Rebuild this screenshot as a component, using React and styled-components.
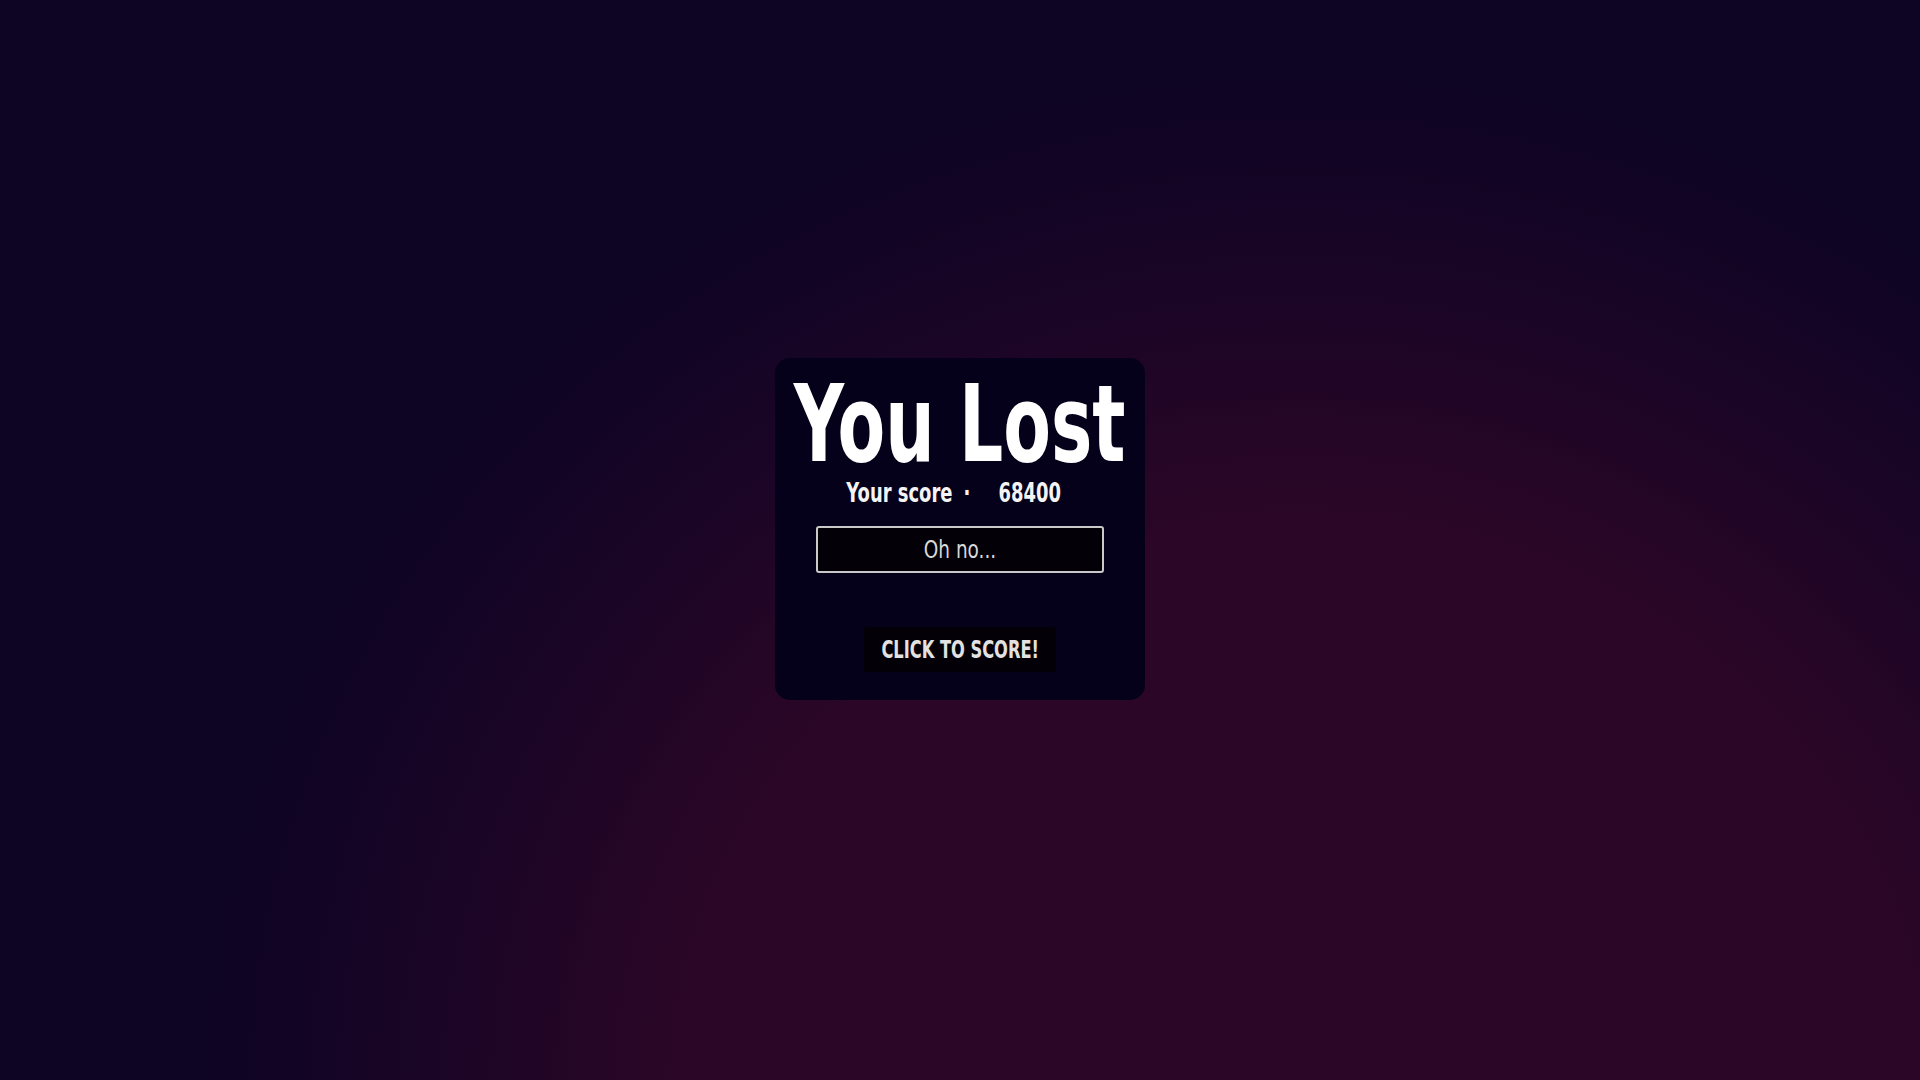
import * as React from 'react';
import styled, {createGlobalStyle} from 'styled-components';

const GlobalStyle = createGlobalStyle`
  html, body {
    margin: 0;
    padding: 0;
    height: 100%;
  }
  body {
    font-family: 'DejaVu Sans', 'Liberation Sans', sans-serif;
    background: #0e0424;
  }
  #root {
    height: 100%;
  }
`;

const Page = styled.div`
  box-sizing: border-box;
  width: 100%;
  height: 100vh;
  display: flex;
  align-items: center;
  justify-content: center;
  padding-bottom: 23px;
  background: radial-gradient(
    ellipse 730px 683px at 1300px 1100px,
    #2c0626 0%,
    #2b0626 85%,
    #1a0526 120%,
    #0e0424 150%
  );
`;

const Card = styled.div`
  box-sizing: border-box;
  width: 370px;
  padding: 13px 0 28px;
  display: flex;
  flex-direction: column;
  align-items: center;
  background-color: #06011a;
  border-radius: 15px;
`;

// the condensed display face isn't installed, so squeeze the text horizontally
const Squeeze = styled.span`
  display: inline-block;
  white-space: nowrap;
  transform: scaleX(${(p) => p.$x});
  transform-origin: center;
`;

const Title = styled.h1`
  margin: 0;
  font-size: 107px;
  line-height: 1;
  font-weight: 700;
  color: #ffffff;
  white-space: nowrap;
`;

const ScoreLine = styled.div`
  margin: 2px 12px 0 0;
  font-size: 26px;
  line-height: 1;
  font-weight: 700;
  color: #f4f4f4;
  white-space: nowrap;
`;

const Separator = styled.span`
  margin: 0 41px 0 16px;
`;

const Message = styled.div`
  box-sizing: border-box;
  margin-top: 20px;
  width: 288px;
  height: 47px;
  display: flex;
  align-items: center;
  justify-content: center;
  background-color: #030008;
  border: 2px solid #c9c9c9;
  border-radius: 3px;
  font-size: 25px;
  line-height: 1;
  color: #d9d9d9;
`;

const ScoreButton = styled.button`
  margin-top: 54px;
  width: 192px;
  height: 45px;
  padding: 0;
  display: flex;
  align-items: center;
  justify-content: center;
  border: none;
  border-radius: 3px;
  background-color: #040007;
  font-family: inherit;
  font-size: 25px;
  line-height: 1;
  font-weight: 700;
  color: #e2e2e2;
  cursor: pointer;
`;

export default function App() {
  return (
    <React.Fragment>
      <GlobalStyle />
      <Page>
        <Card>
          <Title>
            <Squeeze $x={0.649}>You Lost</Squeeze>
          </Title>
          <ScoreLine>
            <Squeeze $x={0.69}>
              Your score<Separator>·</Separator>68400
            </Squeeze>
          </ScoreLine>
          <Message>
            <Squeeze $x={0.738}>Oh no...</Squeeze>
          </Message>
          <ScoreButton>
            <Squeeze $x={0.65}>CLICK TO SCORE!</Squeeze>
          </ScoreButton>
        </Card>
      </Page>
    </React.Fragment>
  );
}
